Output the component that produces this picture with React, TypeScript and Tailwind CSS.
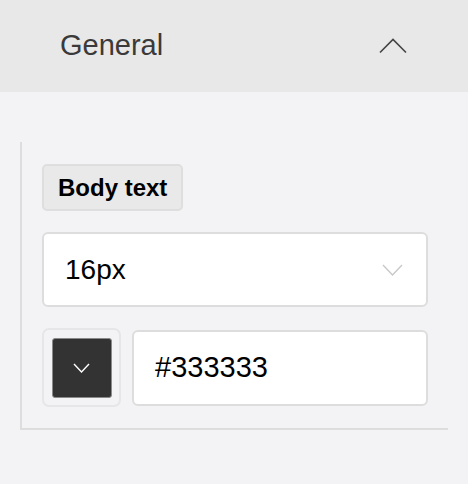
import React from 'react';

const ChevronUp = () => (
  <svg width="28" height="16" viewBox="0 0 28 16" fill="none">
    <path d="M1 14.5L14 1.5L27 14.5" stroke="#444" strokeWidth="1.6" />
  </svg>
);

const ChevronDown = ({ color, w, h }: { color: string; w: number; h: number }) => (
  <svg width={w} height={h} viewBox={`0 0 ${w} ${h}`} fill="none">
    <path d={`M1 1L${w / 2} ${h - 1}L${w - 1} 1`} stroke={color} strokeWidth="1.4" />
  </svg>
);

const App: React.FC = () => {
  return (
    <div
      className="w-[468px] h-[484px] bg-[#f3f3f5] text-[#333]"
      style={{ fontFamily: '"Liberation Sans", Arial, sans-serif' }}
    >
      <div className="h-[92px] bg-[#e8e8e8] flex items-center justify-between pl-[60px] pr-[61px]">
        <span className="text-[29px] text-[#3a3a3a]">General</span>
        <ChevronUp />
      </div>

      <div className="pt-[50px] px-[20px]">
        <div className="border-l-2 border-b-2 border-[#dddddd] pl-[20px] pr-[20px] pt-[22px] pb-[21px]">
          <div className="inline-flex items-center h-[47px] px-[14px] bg-[#e9e9e9] border-2 border-[#dedede] rounded-[5px]">
            <span className="text-[24px] font-bold text-black">Body text</span>
          </div>

          <div className="mt-[21px] h-[75px] bg-white border-2 border-[#dddddd] rounded-[6px] flex items-center justify-between pl-[21px] pr-[23px]">
            <span className="text-[28px] text-black">16px</span>
            <ChevronDown color="#c8c8c8" w={21} h={12} />
          </div>

          <div className="mt-[21px] flex items-center gap-[11px]">
            <div className="w-[79px] h-[79px] border-2 border-[#e6e6e8] rounded-[7px] flex items-center justify-center">
              <div className="w-[60px] h-[60px] bg-[#333333] border border-[#8a8a8a] rounded-[3px] flex items-center justify-center">
                <ChevronDown color="#ffffff" w={17} h={10} />
              </div>
            </div>
            <div className="flex-1 h-[76px] bg-white border-2 border-[#dddddd] rounded-[6px] flex items-center pl-[21px]">
              <span className="text-[29px] text-black">#333333</span>
            </div>
          </div>
        </div>
      </div>
    </div>
  );
};

export default App;
